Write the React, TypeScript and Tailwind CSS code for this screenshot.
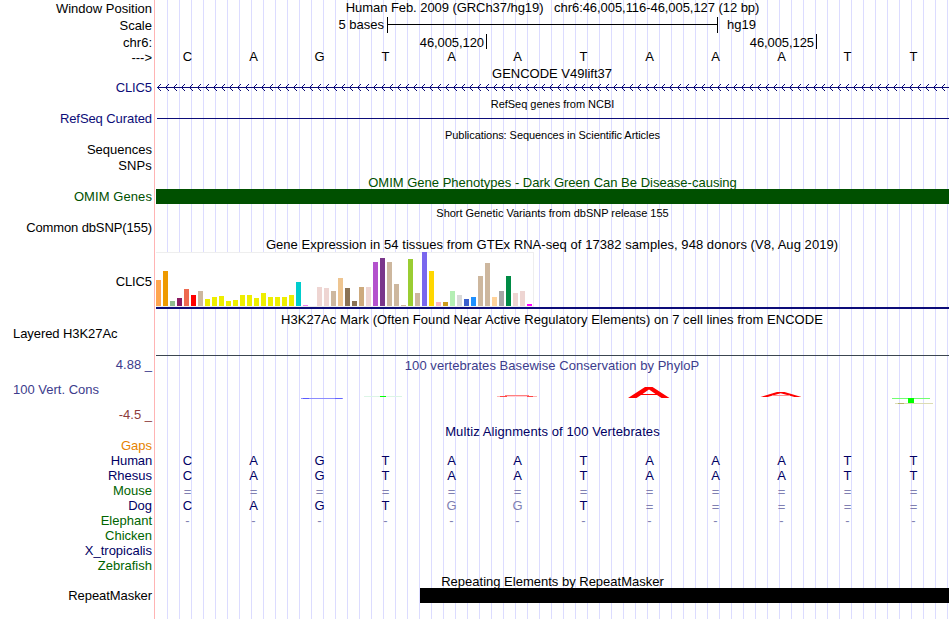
import type { ReactNode } from "react";
import clsx from "clsx";

const BASES = "CAGTAATAAATT".split("");

const ALIGNMENTS = [
	{ species: "Human", bases: "CAGTAATAAATT" },
	{ species: "Rhesus", bases: "CAGTAATAAATT" },
	{ species: "Mouse", bases: "============" },
	{ species: "Dog", bases: "CAGTGGT=====" },
	{ species: "Elephant", bases: "------------" },
];

// GTEx tissues in display order: [colour, bar height]
const TISSUES: [string, number][] = [
	["#ffa54f", 26],
	["#ee9a00", 35],
	["#8fbc8f", 5],
	["#8b1c62", 8],
	["#ee6a50", 17],
	["#ff0000", 11],
	["#cdb79e", 15],
	["#eeee00", 7],
	["#eeee00", 9],
	["#eeee00", 10],
	["#eeee00", 5],
	["#eeee00", 6],
	["#eeee00", 11],
	["#eeee00", 11],
	["#eeee00", 8],
	["#eeee00", 13],
	["#eeee00", 9],
	["#eeee00", 9],
	["#eeee00", 9],
	["#eeee00", 11],
	["#00cdcd", 24],
	["#ee82ee", 1],
	["#9ac0cd", 0],
	["#eed5d2", 19],
	["#eed5d2", 18],
	["#cdb79e", 15],
	["#eec591", 28],
	["#8b7355", 18],
	["#8b7355", 5],
	["#cdaa7d", 19],
	["#eed5d2", 19],
	["#b452cd", 44],
	["#7a378b", 48],
	["#cdb79e", 44],
	["#cdb79e", 22],
	["#cdb79e", 1],
	["#9acd32", 47],
	["#cdb79e", 13],
	["#7a67ee", 54],
	["#ffd700", 35],
	["#ffb6c1", 4],
	["#cd9b1d", 4],
	["#b4eeb4", 15],
	["#d9d9d9", 11],
	["#3a5fcd", 7],
	["#1e90ff", 9],
	["#cdb79e", 30],
	["#cdb79e", 43],
	["#ffd39b", 9],
	["#a6a6a6", 15],
	["#008b45", 30],
	["#eed5d2", 13],
	["#eed5d2", 15],
	["#ff00ff", 2],
];

const CHEVRONS = Array.from({ length: 99 }, (_, index) => 1 + index * 8);

function Label({ children, className }: { children: ReactNode; className?: string }) {
	return <div className={clsx("h-[15px] text-right", className)}>{children}</div>;
}

function Title({ children, className }: { children: ReactNode; className?: string }) {
	return <h2 className={clsx("h-[15px] text-center", className)}>{children}</h2>;
}

function BaseRow({ bases, isDog = false }: { bases: string[]; isDog?: boolean }) {
	return (
		<div className="-ml-[1.5px] grid h-[15px] w-[792px] grid-cols-12 text-center">
			{bases.map((base, index) => {
				const faded = base === "=" || base === "-" || (isDog && base === "G" && index > 3);
				return (
					<span key={index} className={clsx(faded && "text-[#8080b2]", base === "=" && "pt-px")}>
						{base}
					</span>
				);
			})}
		</div>
	);
}

function LabelColumn() {
	return (
		<aside className="flex w-[152px] shrink-0 flex-col pt-px">
			<Label>Window Position</Label>
			<Label className="mt-[2px]">Scale</Label>
			<Label className="mt-[2px]">chr6:</Label>
			<Label>---&gt;</Label>
			<Label className="mt-[15px] tracking-[-0.1px] text-[#0c0c78]">CLIC5</Label>
			<Label className="mt-[16px] tracking-[-0.08px] text-[#0c0c78]">RefSeq Curated</Label>
			<Label className="mt-[16px]">Sequences</Label>
			<Label className="mt-px tracking-[0.15px]">SNPs</Label>
			<Label className="mt-[16px] tracking-[0.08px] text-[#005000]">OMIM Genes</Label>
			<Label className="mt-[16px] tracking-[-0.12px]">Common dbSNP(155)</Label>
			<Label className="mt-[39px] tracking-[-0.1px]">CLIC5</Label>
			<Label className="mt-[37px] pl-[13px] !text-left tracking-[-0.07px]">Layered H3K27Ac</Label>
			<Label className="mt-[16px] text-[#3c3c8c]">4.88 _</Label>
			<Label className="mt-[10px] pl-[13px] !text-left text-[#3c3c8c]">100 Vert. Cons</Label>
			<Label className="mt-[10px] text-[#8c3c3c]">-4.5 _</Label>
			<Label className="mt-[16px] text-[#e68200]">Gaps</Label>
			<Label className="tracking-[-0.15px] text-[#000064]">Human</Label>
			<Label className="text-[#000064]">Rhesus</Label>
			<Label className="text-[#006400]">Mouse</Label>
			<Label className="text-[#000064]">Dog</Label>
			<Label className="text-[#006400]">Elephant</Label>
			<Label className="text-[#006400]">Chicken</Label>
			<Label className="text-[#000064]">X_tropicalis</Label>
			<Label className="text-[#006400]">Zebrafish</Label>
			<Label className="mt-[15px] tracking-[-0.07px]">RepeatMasker</Label>
		</aside>
	);
}

function ScaleBar() {
	return (
		<div className="mt-[2px] flex h-[16px] items-start">
			<span className="w-[228px] text-right">5 bases</span>
			<div className="ml-[3px] flex h-[16px] w-[331px] items-center border-x border-black">
				<div className="-mt-px h-px w-full bg-black" />
			</div>
			<span className="ml-[9px]">hg19</span>
		</div>
	);
}

function Coordinates() {
	return (
		<div className="mt-px flex h-[15px] text-right leading-[17px] tracking-[-0.08px]">
			<span className="w-[331px] border-r border-black pr-[2px]">46,005,120</span>
			<span className="w-[330px] border-r border-black pr-[2px]">46,005,125</span>
		</div>
	);
}

function GeneArrows() {
	return (
		<svg className="block h-[15px] w-[793px]" viewBox="0 0 793 15" shapeRendering="crispEdges">
			<rect x="1" y="6" width="792" height="1" fill="#0c0c78" />
			{CHEVRONS.map((x) => (
				<g key={x} fill="#0c0c78">
					<rect x={x} y="6" width="1" height="1" />
					<rect x={x + 1} y="5" width="1" height="1" />
					<rect x={x + 2} y="4" width="1" height="1" />
					<rect x={x + 3} y="3" width="1" height="1" />
					<rect x={x + 1} y="7" width="1" height="1" />
					<rect x={x + 2} y="8" width="1" height="1" />
					<rect x={x + 3} y="9" width="1" height="1" />
				</g>
			))}
		</svg>
	);
}

function ExpressionChart() {
	return (
		<div className="h-[57px] border-b-2 border-[#0c0c78]">
			<div className="flex h-[55px] w-[378px] items-end gap-[2px] border border-l-0 border-[#eeeeee] bg-white">
				{TISSUES.map(([color, height], index) => (
					<div
						key={index}
						className="w-[5px] shrink-0"
						style={{ height, backgroundColor: color }}
					/>
				))}
			</div>
		</div>
	);
}

// Base letters squashed to the height of their conservation score.
function ConservationLogo() {
	return (
		<svg className="block h-[51px] w-[793px]" viewBox="156 373 793 51">
			<g shapeRendering="crispEdges">
				<rect x="301" y="398" width="42" height="1" fill="#8c8cff" />
				<rect x="303" y="398" width="6" height="1" fill="#5a5aff" />
				<rect x="335" y="398" width="7" height="1" fill="#6464ff" />
				<rect x="364" y="396" width="38" height="1" fill="#dcf5e6" />
				<rect x="380" y="396" width="6" height="1" fill="#00ff00" />
				<rect x="497" y="396" width="4" height="1" fill="#ffb4b4" />
				<rect x="500" y="396" width="7" height="1" fill="#ff4646" />
				<rect x="527" y="396" width="7" height="1" fill="#ff4646" />
				<rect x="533" y="396" width="4" height="1" fill="#ffb4b4" />
				<rect x="505" y="395" width="24" height="1" fill="#ff8080" />
				<rect x="507" y="396" width="20" height="1" fill="#ffd0d8" />
				<rect x="892" y="398" width="38" height="1" fill="#70ff70" />
				<rect x="895" y="403" width="38" height="1" fill="#dcdcb4" />
				<rect x="898" y="403" width="6" height="1" fill="#b4b464" />
				<rect x="908" y="398" width="6" height="5" fill="#00ff00" />
			</g>
			<g fill="#ff0000">
				<path
					fillRule="evenodd"
					d="M628 398 L645 387 H652.5 L669.5 398 H661.5 L657 395 H641 L636.5 398 Z M642.5 394 H655.5 L649 389.5 Z"
				/>
				<path d="M760.5 397 L777 392 H784.5 L801.5 397 H794.5 L780.7 393.2 L767.5 397 Z" />
				<rect x="772" y="395" width="18" height="1" fill="#ff9090" />
			</g>
		</svg>
	);
}

function TrackColumn() {
	return (
		<main className="flex w-[793px] shrink-0 flex-col bg-[linear-gradient(to_right,transparent_11px,#dcdcff_11px)] bg-[length:12px_100%]">
			<Title className="whitespace-pre tracking-[-0.06px]">
				{"Human Feb. 2009 (GRCh37/hg19)   chr6:46,005,116-46,005,127 (12 bp)"}
			</Title>
			<ScaleBar />
			<Coordinates />
			<BaseRow bases={BASES} />
			<Title className="mt-[2px] pr-px">GENCODE V49lift37</Title>
			<GeneArrows />
			<Title className="mt-px text-[11px] tracking-[-0.03px]">RefSeq genes from NCBI</Title>
			<div className="ml-px mt-[6px] h-px bg-[#0c0c78]" />
			<Title className="mt-[9px] text-[11px] tracking-[-0.06px]">
				Publications: Sequences in Scientific Articles
			</Title>
			<Title className="mt-[32px] text-[#005000]">
				OMIM Gene Phenotypes - Dark Green Can Be Disease-causing
			</Title>
			<div className="-mt-px h-[15px] bg-[#005000]" />
			<Title className="mt-[2px] text-[11px] tracking-[-0.02px]">
				Short Genetic Variants from dbSNP release 155
			</Title>
			<Title className="mt-[16px] pr-px tracking-[0.055px]">
				Gene Expression in 54 tissues from GTEx RNA-seq of 17382 samples, 948 donors (V8, Aug 2019)
			</Title>
			<ExpressionChart />
			<Title className="mt-[3px] pr-px tracking-[0.05px]">
				H3K27Ac Mark (Often Found Near Active Regulatory Elements) on 7 cell lines from ENCODE
			</Title>
			<div className="mt-[28px] h-px bg-[#3c4650]" />
			<Title className="mt-[2px] pr-px tracking-[0.05px] text-[#3c3c8c]">
				100 vertebrates Basewise Conservation by PhyloP
			</Title>
			<ConservationLogo />
			<Title className="tracking-[0.1px] text-[#000064]">Multiz Alignments of 100 Vertebrates</Title>
			<div className="mt-[14px] text-[#000064]">
				{ALIGNMENTS.map(({ species, bases }) => (
					<BaseRow key={species} bases={bases.split("")} isDog={species === "Dog"} />
				))}
			</div>
			<Title className="mt-[46px]">Repeating Elements by RepeatMasker</Title>
			<div className="-mt-px ml-[264px] h-[15px] bg-black" />
		</main>
	);
}

export default function App() {
	return (
		<div className="flex h-[619px] w-[950px] overflow-hidden bg-white font-['Liberation_Sans',Arial,sans-serif] text-[13px] leading-[15px] text-black">
			<LabelColumn />
			<div className="ml-[2px] mr-px w-px shrink-0 bg-[#ffb4b4]" />
			<TrackColumn />
		</div>
	);
}
